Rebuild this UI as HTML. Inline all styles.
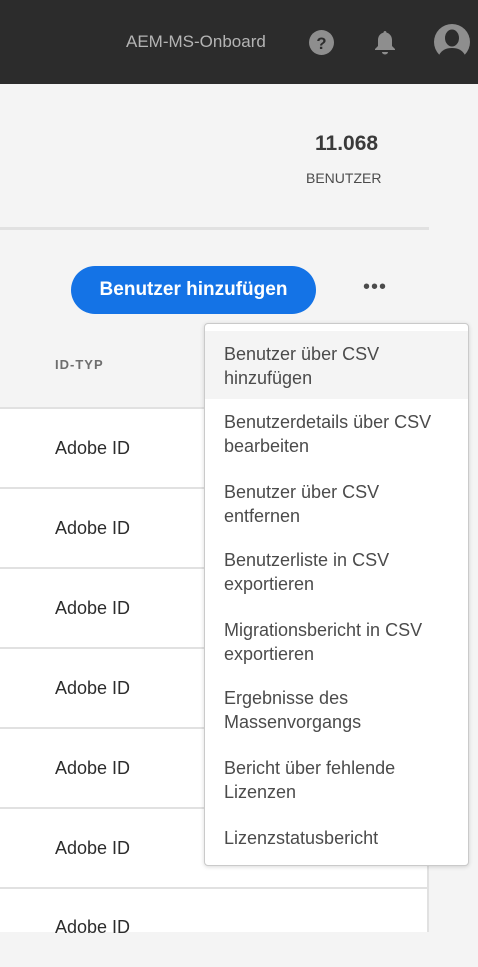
<!DOCTYPE html>
<html><head><meta charset="utf-8"><style>
*{margin:0;padding:0;box-sizing:border-box}
body{width:478px;height:932px;overflow:hidden;background:#f4f4f4;font-family:"Liberation Sans",sans-serif;position:relative}
.hdr{position:absolute;left:0;top:0;width:478px;height:84px;background:#2c2c2c}
.org{position:absolute;left:126px;top:32px;color:#b4b4b4;font-size:17px}
.abs{position:absolute}
.line{position:absolute;left:0;top:227px;width:429px;height:3px;background:#e1e1e1}
.btn{position:absolute;left:71px;top:266px;width:245px;height:48px;border-radius:24px;background:#1473e6;color:#fff;font-weight:bold;font-size:19px;text-align:center;line-height:48px}
.table{position:absolute;left:0;top:407px;width:429px;height:525px;background:#fff;border-right:2px solid #e1e1e1}
.row{height:80px;border-top:2px solid #e1e1e1;font-size:18px;color:#2c2c2c;padding-left:55px;line-height:78px}
.menu{position:absolute;left:204px;top:323px;width:265px;height:543px;background:#fff;border:1px solid #cacaca;border-radius:4px;box-shadow:0 1px 4px rgba(0,0,0,.15)}
.it{position:absolute;left:0;width:263px;padding-left:19px;font-size:18px;line-height:24px;color:#4b4b4b}
</style></head><body>
<div class="hdr">
<div class="org">AEM-MS-Onboard</div>
<svg class="abs" style="left:309px;top:30px" width="25" height="25" viewBox="0 0 24 24"><circle cx="12" cy="12" r="12" fill="#8e8e8e"/><text x="12" y="18" text-anchor="middle" font-family="Liberation Sans" font-weight="bold" font-size="16" fill="#2c2c2c">?</text></svg>
<svg class="abs" style="left:373px;top:29px" width="24" height="27" viewBox="0 0 24 27"><path d="M12 2c1 0 1.5.8 1.5 1.6C17 4.5 19 7.5 19 11v6l3 3v1H2v-1l3-3v-6c0-3.5 2-6.5 5.5-7.4C10.5 2.8 11 2 12 2z" fill="#8e8e8e"/><path d="M9 23h6a3 2.5 0 0 1-6 0z" fill="#8e8e8e"/></svg>
<svg class="abs" style="left:434px;top:24px" width="36" height="36" viewBox="0 0 36 36"><circle cx="18" cy="18" r="18" fill="#8e8e8e"/><ellipse cx="18" cy="14" rx="7" ry="8.5" fill="#2c2c2c"/><path d="M5 31c3-5 7-7 13-7s10 2 13 7a18 18 0 0 1-26 0z" fill="#2c2c2c"/></svg>
</div>
<div class="abs" style="left:315px;top:132px;font-size:21px;font-weight:bold;color:#3a3a3a">11.068</div>
<div class="abs" style="left:306px;top:170px;font-size:14px;color:#4b4b4b">BENUTZER</div>
<div class="line"></div>
<div class="btn">Benutzer hinzufügen</div>
<div class="abs" style="left:363px;top:276px;font-size:20px;color:#4b4b4b;letter-spacing:1px">•••</div>
<div class="abs" style="left:55px;top:357px;font-size:13px;font-weight:bold;color:#6e6e6e;letter-spacing:1px">ID-TYP</div>
<div class="table">
<div class="row">Adobe ID</div><div class="row">Adobe ID</div><div class="row">Adobe ID</div><div class="row">Adobe ID</div><div class="row">Adobe ID</div><div class="row">Adobe ID</div><div class="row" style="line-height:76px">Adobe ID</div>
</div>
<div class="menu">
<div class="abs" style="left:0;top:7px;width:263px;height:68px;background:#f4f4f4"></div>
<div class="it" style="top:18px">Benutzer über CSV<br>hinzufügen</div>
<div class="it" style="top:86px">Benutzerdetails über CSV<br>bearbeiten</div>
<div class="it" style="top:156px">Benutzer über CSV<br>entfernen</div>
<div class="it" style="top:224px">Benutzerliste in CSV<br>exportieren</div>
<div class="it" style="top:294px">Migrationsbericht in CSV<br>exportieren</div>
<div class="it" style="top:362px">Ergebnisse des<br>Massenvorgangs</div>
<div class="it" style="top:432px">Bericht über fehlende<br>Lizenzen</div>
<div class="it" style="top:502px">Lizenzstatusbericht</div>
</div>
</body></html>
